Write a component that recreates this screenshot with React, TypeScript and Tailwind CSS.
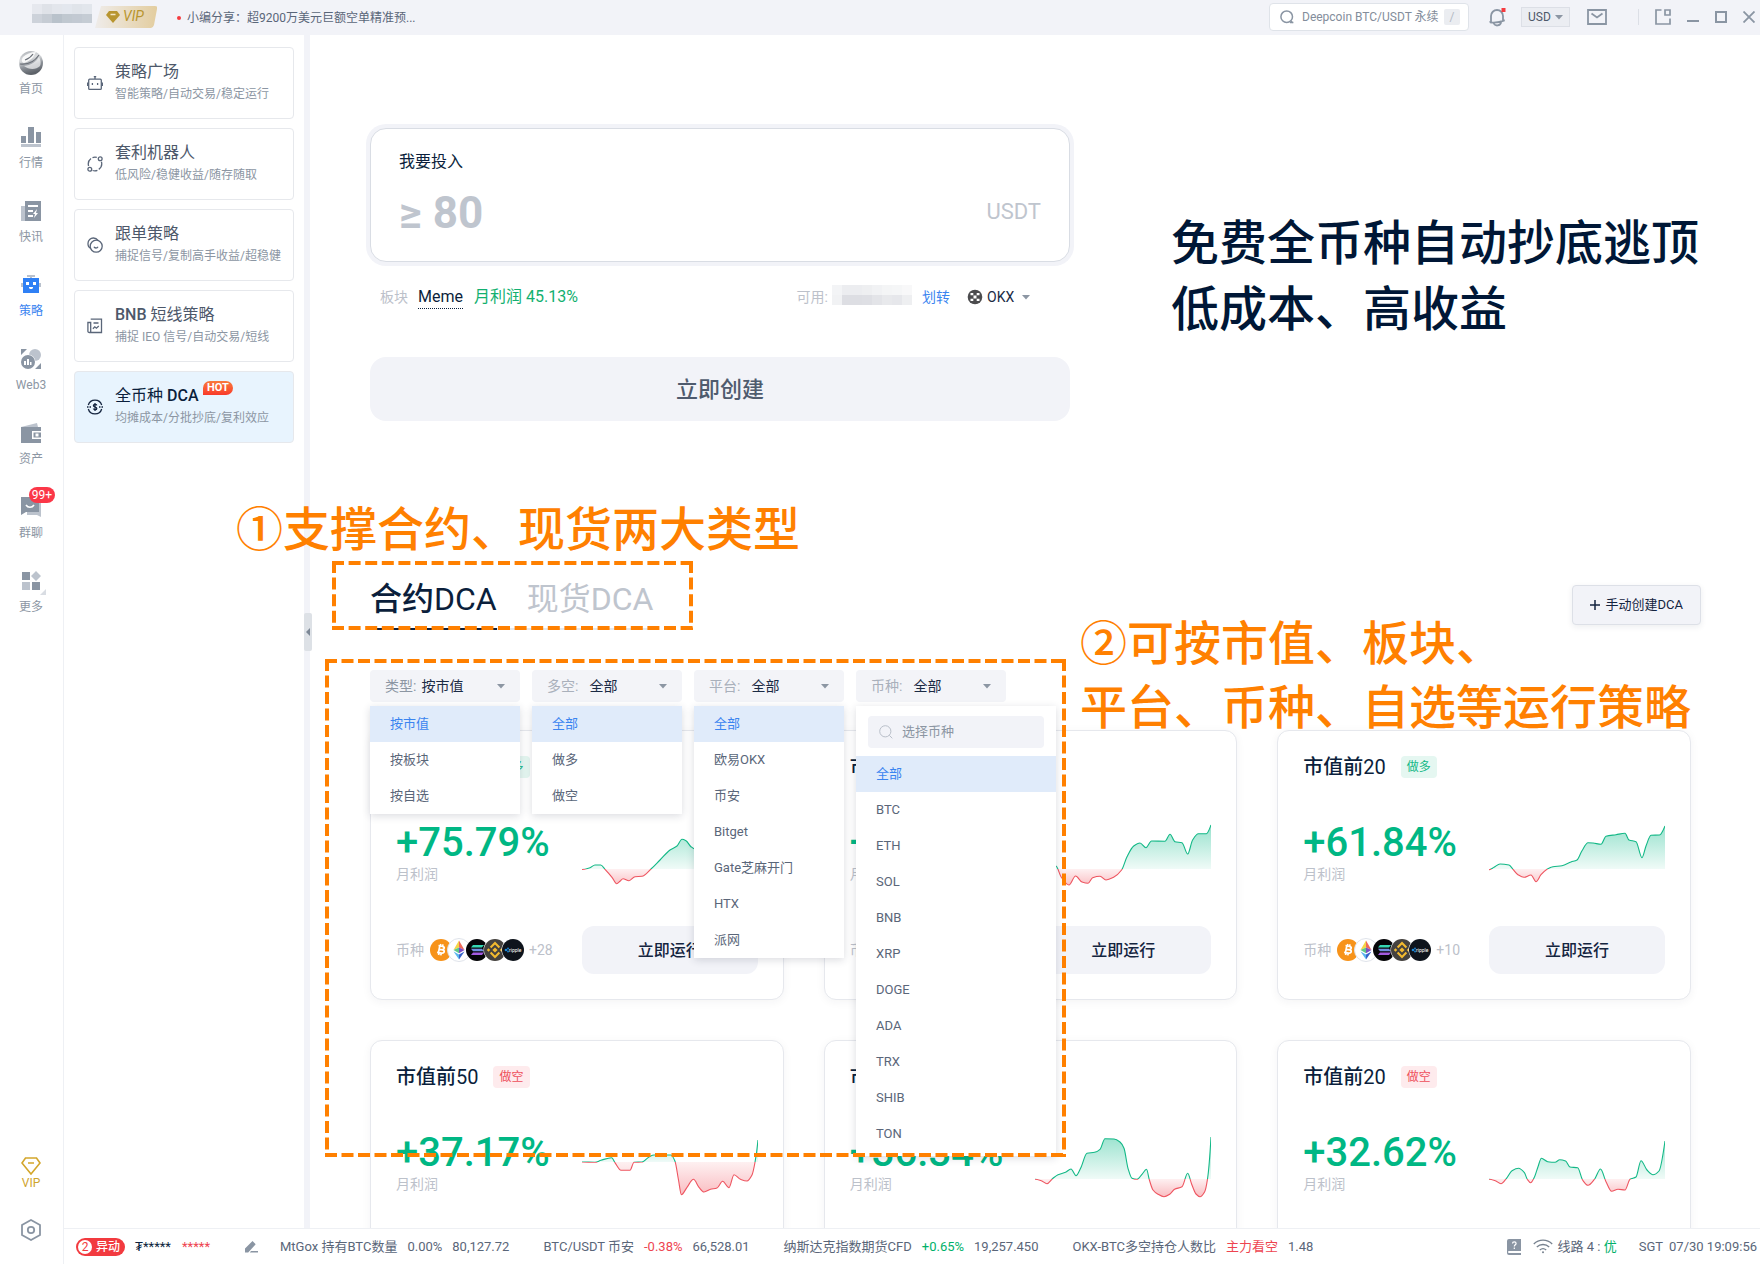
import { useId, useState } from "react";
import type { ReactNode } from "react";

type Point = [number, number];

type Strategy = {
  name: string;
  count: string;
  side: "做多" | "做空";
  profit: string;
  more: string;
  base: number;
  points: Point[];
};

const strategies: Strategy[] = [
  {
    name: "市值前",
    count: "50",
    side: "做多",
    profit: "+75.79%",
    more: "+28",
    base: 48,
    points: [
      [0, 48.5], [8, 46.7], [13, 44], [18.7, 44], [23, 48.3], [30, 56.3], [34.7, 62.7],
      [38, 60.3], [41, 57.7], [47, 59.7], [53, 55.7], [60, 55.3], [69, 48], [78, 39],
      [88, 29], [95, 25], [100, 18.3], [104, 19.7], [109, 25.7], [113, 28], [140, 24], [176, 10],
    ],
  },
  {
    name: "市值前",
    count: "30",
    side: "做多",
    profit: "+68.21%",
    more: "+18",
    base: 48,
    points: [
      [0, 48.5], [10, 44], [21, 45], [26, 55.7], [34, 64], [40.6, 55], [47, 61], [53, 62.3],
      [57.6, 56.7], [65, 55.3], [71, 59], [78.6, 56.3], [86.6, 49], [92, 35.7], [98.7, 25],
      [105, 22], [111, 26.7], [116.5, 20], [130, 20.3], [135, 13.3], [140, 20.7], [147, 21.7],
      [152.7, 33], [157.6, 19], [163.4, 12.7], [171.4, 12.7], [176, 4],
    ],
  },
  {
    name: "市值前",
    count: "20",
    side: "做多",
    profit: "+61.84%",
    more: "+10",
    base: 48,
    points: [
      [0, 48.7], [5, 46.3], [11, 43], [20, 44], [24, 48.3], [29, 53.7], [35, 56.3], [42, 54],
      [47, 60.7], [52, 53.7], [58, 48.3], [64, 45.7], [73, 44.7], [82, 41], [88, 39],
      [93, 29.7], [99, 21.7], [104, 22], [112, 23.3], [117, 15.3], [127, 13.7], [136, 12.3],
      [140, 19], [147, 20.7], [153, 36.7], [157, 25], [162, 14.3], [170.5, 14], [176, 5],
    ],
  },
  {
    name: "市值前",
    count: "50",
    side: "做空",
    profit: "+37.17%",
    more: "+28",
    base: 31,
    points: [
      [0, 31], [13, 31.3], [19, 29.3], [29.6, 26.7], [33.4, 32.3], [39, 39.3], [48, 39.3],
      [52, 31.3], [60, 31], [67.4, 25.7], [72, 24], [89, 24], [93, 30.3], [96.5, 49],
      [99.4, 63.7], [105, 56.3], [111.5, 48.3], [117, 56.3], [122, 61], [128.5, 58.3],
      [135, 57], [140.6, 50.3], [147, 56.7], [152, 43.7], [158.5, 48.3], [165, 50],
      [170, 44], [173, 31.3], [176, 9],
    ],
  },
  {
    name: "市值前",
    count: "30",
    side: "做空",
    profit: "+36.34%",
    more: "+18",
    base: 48,
    points: [
      [0, 48.3], [6.3, 49.7], [12, 52.7], [17.5, 47.7], [23, 43.7], [30.5, 41.3], [36, 38],
      [41, 44.7], [45.6, 37.3], [52, 22.3], [59.6, 21.3], [65, 18.3], [70, 7.7], [79, 8],
      [85, 11], [89, 17.3], [93, 37.3], [97, 47.3], [102, 48.3], [107, 43.3], [111.5, 38.3],
      [114.4, 49], [118, 59], [122.6, 63], [129, 65.7], [135, 63], [139.6, 58.3],
      [147, 55.7], [152.7, 42.3], [156.6, 53], [161, 63], [165, 65.7], [169.7, 60.7],
      [172.6, 47.3], [176, 6],
    ],
  },
  {
    name: "市值前",
    count: "20",
    side: "做空",
    profit: "+32.62%",
    more: "+10",
    base: 48,
    points: [
      [0, 48.3], [6.3, 49.7], [12, 52.7], [17.5, 47.3], [23, 39.7], [29.6, 37.3], [35.4, 41.7],
      [38.3, 48.3], [41.7, 51.7], [45.6, 45.7], [49, 35.7], [52.4, 27.3], [58.7, 30.7],
      [66, 31.3], [70.8, 28.7], [76.6, 30], [81, 36], [88.7, 36.7], [93.6, 49], [99, 54.3],
      [105.7, 48], [111.5, 38], [117, 50.7], [122.6, 60.3], [129, 58.3], [136, 59],
      [141, 48.3], [147, 46], [152, 29.7], [158, 39], [164, 43.7], [170, 40], [176, 10],
    ],
  },
];

// 单调三次插值，避免曲线越界
const linePath = (pts: Point[]) => {
  const slope = pts.map((p, i) => {
    if (i === 0 || i === pts.length - 1) return 0;
    const a = (p[1] - pts[i - 1][1]) / (p[0] - pts[i - 1][0]);
    const b = (pts[i + 1][1] - p[1]) / (pts[i + 1][0] - p[0]);
    return a * b <= 0 ? 0 : (2 * a * b) / (a + b);
  });
  const last = pts.length - 1;
  slope[last] = ((pts[last][1] - pts[last - 1][1]) / (pts[last][0] - pts[last - 1][0])) * 1.4;
  return pts
    .map((p, i) => {
      if (i === 0) return `M${p[0]} ${p[1]}`;
      const q = pts[i - 1];
      const h = (p[0] - q[0]) / 3;
      return `C${q[0] + h} ${q[1] + h * slope[i - 1]} ${p[0] - h} ${p[1] - h * slope[i]} ${p[0]} ${p[1]}`;
    })
    .join("");
};

function ProfitChart({ points, base }: { points: Point[]; base: number }) {
  const id = useId();
  const line = linePath(points);
  const area = `${line}L176 ${base}L0 ${base}Z`;
  return (
    <svg viewBox="0 0 176 80" className="h-20 w-[176px] shrink-0">
      <defs>
        <clipPath id={`${id}u`}>
          <rect x="0" y="0" width="176" height={base} />
        </clipPath>
        <clipPath id={`${id}d`}>
          <rect x="0" y={base} width="176" height={80 - base} />
        </clipPath>
        <linearGradient id={`${id}g`} gradientUnits="userSpaceOnUse" x1="0" x2="0" y1="5" y2={base}>
          <stop offset="0" stopColor="#00b784" stopOpacity="0.4" />
          <stop offset="1" stopColor="#00b784" stopOpacity="0.06" />
        </linearGradient>
        <linearGradient id={`${id}r`} gradientUnits="userSpaceOnUse" x1="0" x2="0" y1={base} y2="68">
          <stop offset="0" stopColor="#f04a56" stopOpacity="0.08" />
          <stop offset="1" stopColor="#f04a56" stopOpacity="0.4" />
        </linearGradient>
      </defs>
      <g clipPath={`url(#${id}u)`}>
        <path d={area} fill={`url(#${id}g)`} />
        <path d={line} fill="none" stroke="#12b886" strokeWidth="1.1" />
      </g>
      <g clipPath={`url(#${id}d)`}>
        <path d={area} fill={`url(#${id}r)`} />
        <path d={line} fill="none" stroke="#ee5560" strokeWidth="1.1" />
      </g>
    </svg>
  );
}

function Coins() {
  return (
    <svg viewBox="0 0 95 24" className="h-6 w-[95px] shrink-0">
      <circle cx="12" cy="12" r="11" fill="#f7931a" />
      <path
        d="M9.5 7.5l4 .8c2.6.6 2.2 3.4-.4 3.3 3 .4 2.8 4-.6 3.5l-4.4-.8M10.8 8l-1.4 6.8M9.700 11l3.6.8M11.8 6l-.4 2M14 6.4l-.4 2M10 15l-.4 2M12.2 15.4l-.4 2"
        fill="none"
        stroke="#fff"
        strokeWidth="1.7"
      />
      <circle cx="30" cy="12" r="11.5" fill="#fff" stroke="#dfe3ea" />
      <path d="M30 2.5L24.5 12 30 9.6z" fill="#f5d547" />
      <path d="M30 2.5L35.5 12 30 9.6z" fill="#ef6a5a" />
      <path d="M24.5 12L30 9.6v5.6z" fill="#5fc88b" />
      <path d="M35.5 12L30 9.6v5.6z" fill="#7b4fc4" />
      <path d="M24.5 13.4L30 16.6v5z" fill="#5bb4ee" />
      <path d="M35.5 13.4L30 16.6v5z" fill="#3562c9" />
      <circle cx="48" cy="12" r="11.5" fill="#fff" />
      <circle cx="48" cy="12" r="11" fill="#050508" />
      <path d="M44 7h11l-2 2.6H42z" fill="#35d6b2" />
      <path d="M42 10.7h11l2 2.6H44z" fill="#6f8fe0" />
      <path d="M44 14.4h11L53 17H42z" fill="#a35be0" />
      <circle cx="66" cy="12" r="11.5" fill="#fff" />
      <circle cx="66" cy="12" r="11" fill="#45423f" />
      <g fill="none" stroke="#f3ba2f" strokeWidth="2.1">
        <path d="M61.6 9.4L66 5l4.4 4.4" />
        <path d="M61.6 14.6L66 19l4.4-4.4" />
      </g>
      <path
        d="M66 9.4l2.6 2.6-2.6 2.6-2.6-2.6zM59.5 10.3l1.7 1.7-1.7 1.7-1.7-1.7zM72.5 10.3l1.7 1.7-1.7 1.7-1.7-1.7z"
        fill="#f3ba2f"
      />
      <circle cx="84" cy="12" r="11.5" fill="#fff" />
      <circle cx="84" cy="12" r="11" fill="#0e141c" />
      <circle cx="77" cy="12" r="1.3" fill="#1b87d8" />
      <circle cx="79" cy="10.5" r="0.9" fill="#1b87d8" />
      <circle cx="79" cy="13.5" r="0.9" fill="#1b87d8" />
      <text x="80" y="14" fontSize="5" fill="#fff">
        ripple
      </text>
    </svg>
  );
}

function StrategyCard({ item }: { item: Strategy }) {
  const tag = item.side === "做多" ? "bg-[#e5f7f1] text-[#12b886]" : "bg-[#feebed] text-[#ee4f5b]";
  return (
    <article className="rounded-xl border border-[#e6e8ed] bg-white px-[25px] pt-[22px] pb-[25px] shadow-[0_2px_10px_rgba(30,40,60,0.05)]">
      <div className="flex h-7 items-center gap-[15px]">
        <h3 className="text-xl text-[#0b1f3c]">
          <span className="font-medium">{item.name}</span>
          {item.count}
        </h3>
        <span className={`flex h-[22px] items-center rounded px-[6px] text-xs ${tag}`}>{item.side}</span>
      </div>
      <div className="mt-10 flex justify-between">
        <div>
          <div className="text-[40px] leading-[44px] font-medium text-[#00b784]">{item.profit}</div>
          <div className="text-sm leading-[18px] text-[#bcc1ca]">月利润</div>
        </div>
        <ProfitChart points={item.points} base={item.base} />
      </div>
      <div className="mt-[25px] flex items-center justify-between">
        <div className="flex items-center text-sm text-[#bcc1ca]">
          <span className="mr-[5px]">币种</span>
          <Coins />
          <span className="ml-[5px]">{item.more}</span>
        </div>
        <button className="h-12 w-[176px] rounded-xl bg-[#f2f3f8] pt-px text-base font-medium text-[#14243f]">立即运行</button>
      </div>
    </article>
  );
}

function Caret() {
  return (
    <svg viewBox="0 0 8 5" className="h-[5px] w-2 shrink-0">
      <path d="M0 0h8L4 4.600z" fill="#8c96a3" />
    </svg>
  );
}

type FilterProps = {
  label: string;
  value: string;
  options: string[];
  tight?: boolean;
  searchable?: boolean;
};

function Filter({ label, value, options, tight, searchable }: FilterProps) {
  const [current, setCurrent] = useState(value);
  return (
    <div className="relative w-[150px]">
      <button
        aria-haspopup="listbox"
        aria-expanded="true"
        className="flex h-8 w-full items-center rounded bg-[#f3f4f8] px-[15px] text-sm"
      >
        <span className={tight ? "mr-[5px] text-[#8c96a3]" : "mr-[11px] text-[#a9b0bb]"}>{label}:</span>
        <span className="mr-auto text-[#1b2b45]">{current}</span>
        <Caret />
      </button>
      <div
        className={`absolute top-9 left-0 z-10 bg-white shadow-[0_2px_8px_rgba(30,40,60,0.16)] ${searchable ? "w-[200px] pb-1" : "w-full"}`}
      >
        {searchable && (
          <label className="mx-3 mt-[10px] mb-2 flex h-8 w-44 items-center rounded bg-[#f2f3f8] px-[11px]">
            <svg viewBox="0 0 14 14" className="mr-[9px] h-[14px] w-[14px] shrink-0" fill="none" stroke="#b9bfc9">
              <circle cx="6.3" cy="6.3" r="5.6" />
              <path d="M10.3 10.3l3 3" />
            </svg>
            <input
              aria-label="选择币种"
              placeholder="选择币种"
              className="w-full min-w-0 bg-transparent text-[13px] outline-none placeholder:text-[#8c96a3]"
            />
          </label>
        )}
        <ul role="listbox" aria-label={label}>
          {options.map((o) => (
            <li
              key={o}
              role="option"
              aria-selected={o === current}
              onClick={() => setCurrent(o)}
              className={`flex h-9 cursor-pointer items-center px-5 text-[13px] ${
                o === current ? "bg-[#e0ebfa] text-[#3a84f0]" : "text-[#5a6679]"
              }`}
            >
              {o}
            </li>
          ))}
        </ul>
      </div>
    </div>
  );
}

const navItems: { label: string; icon: ReactNode; active?: boolean; badge?: string }[] = [
  {
    label: "首页",
    icon: (
      <svg viewBox="0 0 24 24" className="h-6 w-6">
        <defs>
          <linearGradient id="globe" x1="0" y1="0" x2="0.3" y2="1">
            <stop offset="0" stopColor="#a4a8ad" />
            <stop offset="0.4" stopColor="#dcdee0" />
            <stop offset="0.7" stopColor="#8b9097" />
            <stop offset="1" stopColor="#5d6269" />
          </linearGradient>
        </defs>
        <circle cx="12" cy="12" r="12" fill="url(#globe)" />
        <path d="M4 6c3-3 8-5 13-5-2 5-6 9-12 11-2 0-3-3-1-6z" fill="#fff" opacity="0.85" />
        <path d="M5 15c7-1 12-4 15-9 2 3 2 7 1 9-4 4-11 4-16 0z" fill="#fff" opacity="0.65" />
        <path d="M1 13c8 1 15-3 19-9M6 9c3-1 6-3 8-6" fill="none" stroke="#6b7078" strokeWidth="1.2" />
      </svg>
    ),
  },
  {
    label: "行情",
    icon: (
      <svg viewBox="0 0 20 20" className="h-5 w-5">
        <path d="M0 9h5v7H0zM7 0h6v16H7zM15 5h5v11h-5z" fill="#8a95a3" />
        <path d="M0 17h20v3H0z" fill="#bcc3cd" />
      </svg>
    ),
  },
  {
    label: "快讯",
    icon: (
      <svg viewBox="0 0 20 20" className="h-5 w-5">
        <path d="M0 5h4v15H0z" fill="#bcc3cd" />
        <path d="M4 0h16v20H4z" fill="#8a95a3" />
        <path d="M7 4h10v2H7zM7 9h5v2H7zM7 14h5v2H7zM16 8l-4 5h2l-1 4 4-5h-2z" fill="#fff" />
      </svg>
    ),
  },
  {
    label: "策略",
    active: true,
    icon: (
      <svg viewBox="0 0 20 20" className="h-5 w-5">
        <path d="M6 0h8v2h-3v2H9V2H6zM0 8h20v4H0z" fill="#b9c1cd" />
        <path d="M2 3h16v15H2z" fill="#2f80f5" />
        <path d="M5 7h3v3H5zM12 7h3v3h-3zM8 12h4v1l-1 1H9l-1-1z" fill="#fff" />
      </svg>
    ),
  },
  {
    label: "Web3",
    icon: (
      <svg viewBox="0 0 20 20" className="h-5 w-5">
        <circle cx="14" cy="6" r="6" fill="#bcc3cd" />
        <circle cx="7" cy="13" r="7.6" fill="#fff" />
        <circle cx="7" cy="13" r="7" fill="#8a95a3" />
        <path d="M0 0h6L0 6zM20 14v6h-6z" fill="#8a95a3" />
        <path d="M3 12h2v4H3zM6 10h2v6H6zM9 13h1.5v3H9z" fill="#fff" />
      </svg>
    ),
  },
  {
    label: "资产",
    icon: (
      <svg viewBox="0 0 20 20" className="h-5 w-5">
        <path d="M0 4L16 0l1 4z" fill="#bcc3cd" />
        <path d="M0 4h20v16H0z" fill="#8a95a3" />
        <path d="M11 8h9v1.5h-7.5v5H20V16h-9z" fill="#fff" />
        <path d="M14.5 10.5h3v3h-3z" fill="#fff" />
      </svg>
    ),
  },
  {
    label: "群聊",
    badge: "99+",
    icon: (
      <svg viewBox="0 0 20 20" className="h-5 w-5">
        <path d="M6 4h14v16l-4-2H6z" fill="#bcc3cd" />
        <path d="M0 0h18v15H5l-5 3z" fill="#8a95a3" />
        <path d="M5 8c2 3 6 3 8 0" fill="none" stroke="#fff" strokeWidth="1.6" />
      </svg>
    ),
  },
  {
    label: "更多",
    icon: (
      <svg viewBox="0 0 20 20" className="h-5 w-5 overflow-visible">
        <path d="M1 1h8v8H1zM11 11h8v8h-8z" fill="#8a95a3" />
        <path d="M1 11h8v8H1zM15 0l5 5-5 5-5-5z" fill="#bcc3cd" />
        <path d="M25 18v6h-6z" fill="#d9dde3" />
      </svg>
    ),
  },
];

const sideItems: { title: string; en?: string; sub: string; icon: ReactNode; hot?: boolean }[] = [
  {
    title: "策略广场",
    sub: "智能策略/自动交易/稳定运行",
    icon: (
      <>
        <rect x="1.7" y="4.2" width="12.6" height="10.2" rx="1" />
        <path d="M8 4V1M6.8 1.6h2.4M.6 7.5v3.5M15.4 7.5v3.5M5.4 8v2M10.6 8v2" />
      </>
    ),
  },
  {
    title: "套利机器人",
    sub: "低风险/稳健收益/随存随取",
    icon: (
      <>
        <path d="M1.600 10A7 7 0 0 1 4 2.600M5.500 1.600a7 7 0 0 1 4.300-.2M14.400 5.800a7 7 0 0 1-2.600 7.600M10.400 14.400a7 7 0 0 1-4.800.100" />
        <circle cx="13.200" cy="2.800" r="1.900" />
        <circle cx="2.800" cy="13.200" r="1.900" />
      </>
    ),
  },
  {
    title: "跟单策略",
    sub: "捕捉信号/复制高手收益/超稳健",
    icon: (
      <>
        <circle cx="9.2" cy="9.2" r="6" />
        <path d="M3.8 11.4A5.4 5.4 0 0 1 1 6.2 5.3 5.3 0 0 1 6.4 1c2 0 3.6.9 4.6 2.3M7 9.8c.6 1.6 3.2 1.6 4 0" />
      </>
    ),
  },
  {
    title: " 短线策略",
    en: "BNB",
    sub: "捕捉 IEO 信号/自动交易/短线",
    icon: (
      <>
        <path d="M3.700 1.200h10.800v13.300H2.400c-1 0-1.500-.6-1.500-1.600V4.500h2.800v10M6.500 5h5M5.900 10.800l1.900-2 1.600 1.400 2.400-2.200" />
      </>
    ),
  },
  {
    title: "全币种",
    en: "DCA",
    sub: "均摊成本/分批抄底/复利效应",
    hot: true,
    icon: (
      <>
        <path d="M1.3 6A7 7 0 0 1 14.700 6M1.3 10a7 7 0 0 0 13.400 0" />
        <path d="M0 8h1.500M2.500 8H4M12 8h1.500M14.500 8H16M9.800 6.400C9.400 5 6.400 5.100 6.400 6.700s3.400 1 3.400 2.700-3 1.600-3.500.200M8 4v8" />
      </>
    ),
  },
];

const tickers = [
  { name: "MtGox 持有BTC数量", change: "0.00%", color: "text-[#5a6679]", price: "80,127.72" },
  { name: "BTC/USDT 币安", change: "-0.38%", color: "text-[#ee4450]", price: "66,528.01" },
  { name: "纳斯达克指数期货CFD", change: "+0.65%", color: "text-[#00b16a]", price: "19,257.450" },
  { name: "OKX-BTC多空持仓人数比", change: "主力看空", color: "text-[#ee4450]", price: "1.48" },
];

function Header() {
  return (
    <header className="flex h-[35px] shrink-0 items-center bg-[#f2f3f8] pr-[5px] pl-8 text-xs">
      {/* 账号打码 */}
      <div className="mb-2 grid h-[19px] w-[60px] grid-cols-6 grid-rows-2">
        <i className="bg-[#e6e8ee]" />
        <i className="bg-[#dfe2e8]" />
        <i className="bg-[#e3e6ec]" />
        <i className="bg-[#e3e7ee]" />
        <i className="bg-[#e0e4ea]" />
        <i className="bg-[#e2e6ec]" />
        <i className="bg-[#cdd2da]" />
        <i className="bg-[#c6ccd4]" />
        <i className="bg-[#b9c2cb]" />
        <i className="bg-[#c0c8d0]" />
        <i className="bg-[#c2c9d2]" />
        <i className="bg-[#c5ccd4]" />
      </div>
      <svg viewBox="0 0 62 22" className="mr-5 mb-[2px] ml-[3px] h-[22px] w-[62px] shrink-0">
        <defs>
          <linearGradient id="vip" x1="0" x2="1">
            <stop offset="0" stopColor="#efecea" />
            <stop offset="1" stopColor="#e3cd9f" />
          </linearGradient>
        </defs>
        <path d="M6 0h54q3 0 2 3l-3 16q-1 3-3 3H0z" fill="url(#vip)" />
        <path d="M14 5h8l3 4-7 8-7-8z" fill="#b8952f" />
        <path d="M15.5 8.5h5" stroke="#f3e6c4" strokeWidth="1.5" />
        <text x="28" y="15" fontSize="14" fontStyle="italic" fill="#b8952f">
          VIP
        </text>
      </svg>
      <i className="h-1 w-1 rounded-full bg-[#f53b3f]" />
      <a href="#news" className="ml-[6px] text-[#5a6679]">
        小编分享：超9200万美元巨额空单精准预...
      </a>

      <label className="mb-px ml-auto flex h-7 w-[200px] items-center rounded border border-[#dfe3e9] bg-white pr-2 pl-[10px]">
        <svg viewBox="0 0 14 14" className="mr-2 h-[14px] w-[14px] shrink-0" fill="none" stroke="#8a95a3" strokeWidth="1.5">
          <circle cx="6.7" cy="6.7" r="5.8" />
          <path d="M10 12.5h3.4M11 11l2 2" />
        </svg>
        <input
          aria-label="搜索"
          placeholder="Deepcoin BTC/USDT 永续"
          className="w-full min-w-0 bg-transparent outline-none placeholder:text-[#838d9b]"
        />
        <kbd className="flex h-4 w-4 shrink-0 items-center justify-center rounded-xs bg-[#ebedf1] font-['Roboto',sans-serif] text-[#b5bbc5]">
          /
        </kbd>
      </label>
      <button aria-label="通知" className="mb-[2px] ml-5">
        <svg viewBox="0 0 18 20" className="h-5 w-[18px]" fill="none" stroke="#8a95a3" strokeWidth="1.8">
          <path d="M.5 15.200L2 14.500V9a6 6 0 0 1 12 0v4.500l1.800 0M1 15.400c5 .6 10 0 14.500-2M4.600 16c1.500 3.600 6.500 3.200 7.600-.8" />
          <path d="M12.500 1h4v4h-4z" fill="#f53b3f" stroke="none" />
        </svg>
      </button>
      <div className="relative mb-px ml-[14px] flex h-5 w-[49px] items-center border border-[#dcdfe6] bg-[#ebedf2]">
        <select aria-label="计价货币" className="w-full appearance-none bg-transparent pl-[6px] text-[#4d586a] outline-none">
          <option>USD</option>
        </select>
        <span className="pointer-events-none absolute right-[6px] flex">
          <Caret />
        </span>
      </div>
      <button aria-label="邮件" className="mb-px ml-[17px]">
        <svg viewBox="0 0 20 16" className="h-4 w-5" fill="none" stroke="#8a95a3" strokeWidth="1.8">
          <path d="M1 1h18v14H1zM4.500 4.500L10 8.500l5.500-4" />
        </svg>
      </button>
      <i className="mb-px ml-[31px] h-4 w-px bg-[#dcdfe6]" />
      <button aria-label="弹出" className="mb-px ml-4">
        <svg viewBox="0 0 16 16" className="h-4 w-4" fill="none" stroke="#8a95a3" strokeWidth="1.7">
          <path d="M6.500 1H1v14h14V9.500" />
          <path d="M10 1h5v5h-5z" />
        </svg>
      </button>
      <button aria-label="最小化" className="mb-px ml-4">
        <svg viewBox="0 0 12 12" className="h-3 w-3">
          <path d="M0 9h12v2H0z" fill="#8a95a3" />
        </svg>
      </button>
      <button aria-label="最大化" className="mb-px ml-4">
        <svg viewBox="0 0 12 12" className="h-3 w-3" fill="none" stroke="#8a95a3" strokeWidth="2">
          <path d="M1 1h10v10H1z" />
        </svg>
      </button>
      <button aria-label="关闭" className="mb-px ml-4">
        <svg viewBox="0 0 12 12" className="h-3 w-3" fill="none" stroke="#8a95a3" strokeWidth="1.8">
          <path d="M.5.5l11 11M11.5.5l-11 11" />
        </svg>
      </button>
    </header>
  );
}

function NavRail() {
  return (
    <nav className="flex w-16 shrink-0 flex-col items-center border-r border-[#eef0f4] pt-4 pr-px text-xs text-[#8c96a3]">
      {navItems.map((n) => (
        <a
          key={n.label}
          href="#nav"
          className={`relative flex h-[74px] flex-col items-center ${n.active ? "text-[#3a84f0]" : ""}`}
        >
          <span className="flex h-6 items-center">{n.icon}</span>
          <span className="mt-[6px] leading-4">{n.label}</span>
          {n.badge && (
            <span className="absolute -top-2 left-[10px] flex h-4 w-[26px] items-center justify-center rounded-full bg-[#fb3748] text-white">
              {n.badge}
            </span>
          )}
        </a>
      ))}
      <a href="#vip" className="mt-auto flex flex-col items-center text-[#cfa42c]">
        <svg viewBox="0 0 20 18" className="h-[18px] w-5" fill="none" stroke="#d3a62b" strokeWidth="1.6">
          <path d="M4.500 1h11L19 6l-9 11L1 6zM7 6h6" />
        </svg>
        <span className="leading-4">VIP</span>
      </a>
      <button aria-label="设置" className="mt-7 mb-[23px]">
        <svg viewBox="0 0 20 22" className="h-[22px] w-5" fill="none" stroke="#8a95a3" strokeWidth="1.8">
          <path d="M10 1l9 5v10l-9 5-9-5V6z" />
          <circle cx="10" cy="11" r="3.200" />
        </svg>
      </button>
    </nav>
  );
}

function SidePanel() {
  return (
    <aside className="flex w-60 shrink-0 flex-col gap-[9px] px-[10px] py-3">
      {sideItems.map((s) => (
        <a
          key={s.sub}
          href="#strategy"
          className={`flex h-[72px] items-center rounded border border-[#e6e8ec] pl-3 ${s.hot ? "bg-[#e8f4fe]" : "bg-white"}`}
        >
          <svg
            viewBox="0 0 16 16"
            className="mr-3 h-4 w-4 shrink-0"
            fill="none"
            stroke={s.hot ? "#14243f" : "#5a6679"}
            strokeWidth="1.3"
          >
            {s.icon}
          </svg>
          <span className="pb-[2px]">
            <span className={`relative block text-base leading-6 ${s.hot ? "text-[#0b1f3c]" : "text-[#4d586a]"}`}>
              {s.hot ? (
                <>
                  {s.title} <b className="font-medium">{s.en}</b>
                  <b className="absolute -top-[3px] left-[88px] flex h-[14px] w-[30px] items-center justify-center rounded-[7px] rounded-bl-none bg-linear-to-b from-[#f9783c] to-[#f8382a] text-[11px] font-bold text-white">
                    HOT
                  </b>
                </>
              ) : (
                <>
                  {s.en && <b className="font-medium">{s.en}</b>}
                  {s.title}
                </>
              )}
            </span>
            <span className="block text-xs leading-5 text-[#8c96a3]">{s.sub}</span>
          </span>
        </a>
      ))}
    </aside>
  );
}

function InvestForm() {
  return (
    <section className="w-full max-w-[700px]">
      <label className="block h-[134px] rounded-2xl border border-[#d9dde4] bg-white px-7 pt-[21px] ring-4 ring-[#f2f3f8]">
        <span className="block text-base leading-6 text-[#0b1f3c]">我要投入</span>
        <span className="mt-3 flex items-center">
          <input
            placeholder="≥ 80"
            className="h-[52px] w-full min-w-0 bg-transparent pt-[2px] text-[44px] font-bold outline-none placeholder:text-[#bfc5ce]"
          />
          <span className="pb-px text-[22px] text-[#bfc5ce]">USDT</span>
        </span>
      </label>
      <div className="mt-[23px] flex h-6 items-center pr-10 pl-[10px] text-sm">
        <span className="text-[#bcc1ca]">板块</span>
        <a href="#sector" className="ml-[10px] border-b border-dotted border-[#0b1f3c] text-base leading-[22px] text-[#0b1f3c]">
          Meme
        </a>
        <span className="ml-[11px] text-base text-[#12b070]">月利润 45.13%</span>
        <span className="ml-auto text-[#bcc1ca]">可用:</span>
        <span className="mb-1 ml-1 grid h-5 w-20 grid-cols-8 grid-rows-2">
          <i className="bg-[#f3f4f6]" />
          <i className="bg-[#ecedf0]" />
          <i className="bg-[#ecedf0]" />
          <i className="bg-[#eeeff1]" />
          <i className="bg-[#f1f2f4]" />
          <i className="bg-[#f4f5f6]" />
          <i className="bg-[#f5f6f7]" />
          <i className="bg-[#f8f8f9]" />
          <i className="bg-[#f1f2f4]" />
          <i className="bg-[#dddee3]" />
          <i className="bg-[#dddee3]" />
          <i className="bg-[#dedfe4]" />
          <i className="bg-[#e3e4e8]" />
          <i className="bg-[#e8e9ec]" />
          <i className="bg-[#e6e7eb]" />
          <i className="bg-[#eeeff1]" />
        </span>
        <a href="#transfer" className="ml-[10px] text-[#3a84f0]">
          划转
        </a>
        <svg viewBox="0 0 16 16" className="ml-[17px] h-4 w-4">
          <circle cx="8" cy="8" r="7.300" fill="#4c4c4e" />
          <path
            d="M6.500 6.500h3v3h-3zM3.500 4h2.800v2.300H3.500zM9.700 4h2.800v2.300H9.700zM3.500 9.700h2.800V12H3.500zM9.700 9.700h2.800V12H9.700z"
            fill="#fff"
          />
        </svg>
        <span className="relative ml-1 flex w-[43px] items-center">
          <select aria-label="平台账户" className="w-full appearance-none bg-transparent text-[#1b2b45] outline-none">
            <option>OKX</option>
          </select>
          <span className="pointer-events-none absolute right-0 flex">
            <Caret />
          </span>
        </span>
      </div>
      <button className="mt-12 h-16 w-full rounded-2xl bg-[#f2f3f8] text-[22px] font-medium text-[#4f5b6e]">立即创建</button>
    </section>
  );
}

function Footer() {
  return (
    <footer className="flex h-9 shrink-0 items-center overflow-hidden border-t border-[#eef0f4] bg-white pr-[3px] pl-3 text-[13px] whitespace-nowrap text-[#5a6679]">
      <span className="flex h-[18px] shrink-0 items-center rounded-full bg-[#f23a3f] pr-[5px] pl-[2px] text-xs font-medium text-white">
        <i className="mr-1 flex h-[14px] w-[14px] items-center justify-center rounded-full bg-white font-normal text-[#f23a3f] not-italic">
          2
        </i>
        异动
      </span>
      <span className="ml-[10px] w-9 text-[#0b1f3c]">₮*****</span>
      <span className="ml-[11px] w-[31px] text-[#ee4450]">*****</span>
      <button aria-label="编辑" className="mr-[22px] ml-8 shrink-0">
        <svg viewBox="0 0 13 13" className="h-[13px] w-[13px]" fill="#8a95a3">
          <path d="M0 12.500v-4L7.500 1l3.200 3.200-7.500 8.300zM6 11h7v1.600H4.800z" />
        </svg>
      </button>
      <div className="flex gap-[34px]">
        {tickers.map((t) => (
          <span key={t.name} className="flex gap-[10px]">
            <span>{t.name}</span>
            <span className={t.color}>{t.change}</span>
            <span>{t.price}</span>
          </span>
        ))}
      </div>
      <svg viewBox="0 0 14 16" className="ml-auto h-4 w-[14px] shrink-0">
        <path d="M2 0h12v12H2q-1 0-1 1t1 1h12v2H2q-2 0-2-2V2q0-2 2-2z" fill="#8a95a3" />
        <path d="M5.500 4.500c0-2.200 3.600-2.200 3.600 0 0 1.300-1.800 1.300-1.800 3M7.300 8.600v1.500" fill="none" stroke="#fff" strokeWidth="1.2" />
      </svg>
      <svg viewBox="0 0 20 15" className="ml-3 h-[15px] w-5 shrink-0" fill="none" stroke="#77828f" strokeWidth="1.3">
        <path d="M.8 5a13 13 0 0 1 18.400 0M3.800 8a9 9 0 0 1 12.400 0M6.800 11a5 5 0 0 1 6.400 0" />
        <circle cx="10" cy="13.200" r="1" fill="#77828f" stroke="none" />
      </svg>
      <span className="ml-[5px]">
        线路 4 : <span className="text-[#00b16a]">优</span>
      </span>
      <span className="ml-[22px]">SGT</span>
      <time className="ml-[6px]">07/30 19:09:56</time>
    </footer>
  );
}

// 教程标注层
function Annotations() {
  return (
    <div className="pointer-events-none absolute inset-0 z-20 overflow-hidden text-[47px] leading-[64px] font-medium whitespace-nowrap text-[#ff8000]">
      <p className="absolute top-[498px] left-[236px]">①支撑合约、现货两大类型</p>
      <svg className="absolute top-[561px] left-[332px] h-[69px] w-[361px]" fill="none" stroke="#ff8000" strokeWidth="4">
        <path d="M0 2H361M0 67H361M2 0V69M359 0V69" strokeDasharray="12 4.6" />
      </svg>
      <svg className="absolute top-[659px] left-[325px] h-[498px] w-[741px]" fill="none" stroke="#ff8000" strokeWidth="4">
        <path d="M0 2H741M0 496H741M2 0V498M739 0V498" strokeDasharray="12 4.5" />
      </svg>
      <p className="absolute top-[612px] left-[1080px]">
        ②可按市值、板块、
        <br />
        平台、币种、自选等运行策略
      </p>
    </div>
  );
}

export default function App() {
  const [tab, setTab] = useState("合约");

  return (
    <div className="relative flex h-screen flex-col overflow-hidden bg-white font-['Roboto','Noto_Sans_CJK_SC',sans-serif]">
      <Header />
      <div className="flex min-h-0 flex-1">
        <NavRail />
        <div className="flex min-w-0 flex-1 flex-col">
          <div className="flex min-h-0 flex-1">
            <SidePanel />
            <div className="relative w-[6px] shrink-0 bg-[#f2f3f8]">
              <button
                aria-label="收起侧栏"
                className="absolute top-[578px] left-0 z-10 flex h-[38px] w-2 items-center justify-center rounded-xs bg-[#dde1e6]"
              >
                <svg viewBox="0 0 4 8" className="h-2 w-1">
                  <path d="M4 0v8L0 4z" fill="#7d8896" />
                </svg>
              </button>
            </div>
            <main className="min-w-0 flex-1 overflow-hidden pt-[93px] pr-[59px] pl-[60px]">
              <div className="flex gap-[101px]">
                <InvestForm />
                <h1 className="mt-[83px] shrink-0 text-5xl leading-[66px] font-medium whitespace-nowrap text-[#001736]">
                  免费全币种自动抄底逃顶
                  <br />
                  低成本、高收益
                </h1>
              </div>

              <div className="mt-[153px] flex items-end justify-between">
                <div role="tablist" className="flex gap-[30px] border-b-2 border-[#e4e7ec] text-[32px] leading-[48px]">
                  {["合约", "现货"].map((t) => (
                    <button
                      key={t}
                      role="tab"
                      aria-selected={t === tab}
                      onClick={() => setTab(t)}
                      className={`-mb-[2px] border-b-2 pt-px pb-[5px] ${
                        t === tab ? "border-[#0b1f3c] text-[#0b1f3c]" : "border-transparent text-[#bfc5ce]"
                      }`}
                    >
                      <span className={t === tab ? "font-medium" : ""}>{t}</span>DCA
                    </button>
                  ))}
                </div>
                <button className="mb-[5px] flex h-10 items-center rounded border border-[#dde0e7] bg-[#f2f3f8] px-[17px] text-[13px] text-[#14243f] shadow-[0_2px_6px_rgba(30,40,60,0.08)]">
                  <svg viewBox="0 0 10 10" className="mr-[6px] h-[10px] w-[10px]" stroke="#14243f" strokeWidth="1.5">
                    <path d="M5 0v10M0 5h10" />
                  </svg>
                  手动创建DCA
                </button>
              </div>

              <div className="mt-10 flex gap-3">
                <Filter label="类型" value="按市值" options={["按市值", "按板块", "按自选"]} tight />
                <Filter label="多空" value="全部" options={["全部", "做多", "做空"]} />
                <Filter
                  label="平台"
                  value="全部"
                  options={["全部", "欧易OKX", "币安", "Bitget", "Gate芝麻开门", "HTX", "派网"]}
                />
                <Filter
                  label="币种"
                  value="全部"
                  options={["全部", "BTC", "ETH", "SOL", "BNB", "XRP", "DOGE", "ADA", "TRX", "SHIB", "TON"]}
                  searchable
                />
              </div>

              <div className="mt-7 mr-[10px] grid grid-cols-3 gap-10">
                {strategies.map((s, i) => (
                  <StrategyCard key={i} item={s} />
                ))}
              </div>
            </main>
          </div>
          <Footer />
        </div>
      </div>
      <Annotations />
    </div>
  );
}
